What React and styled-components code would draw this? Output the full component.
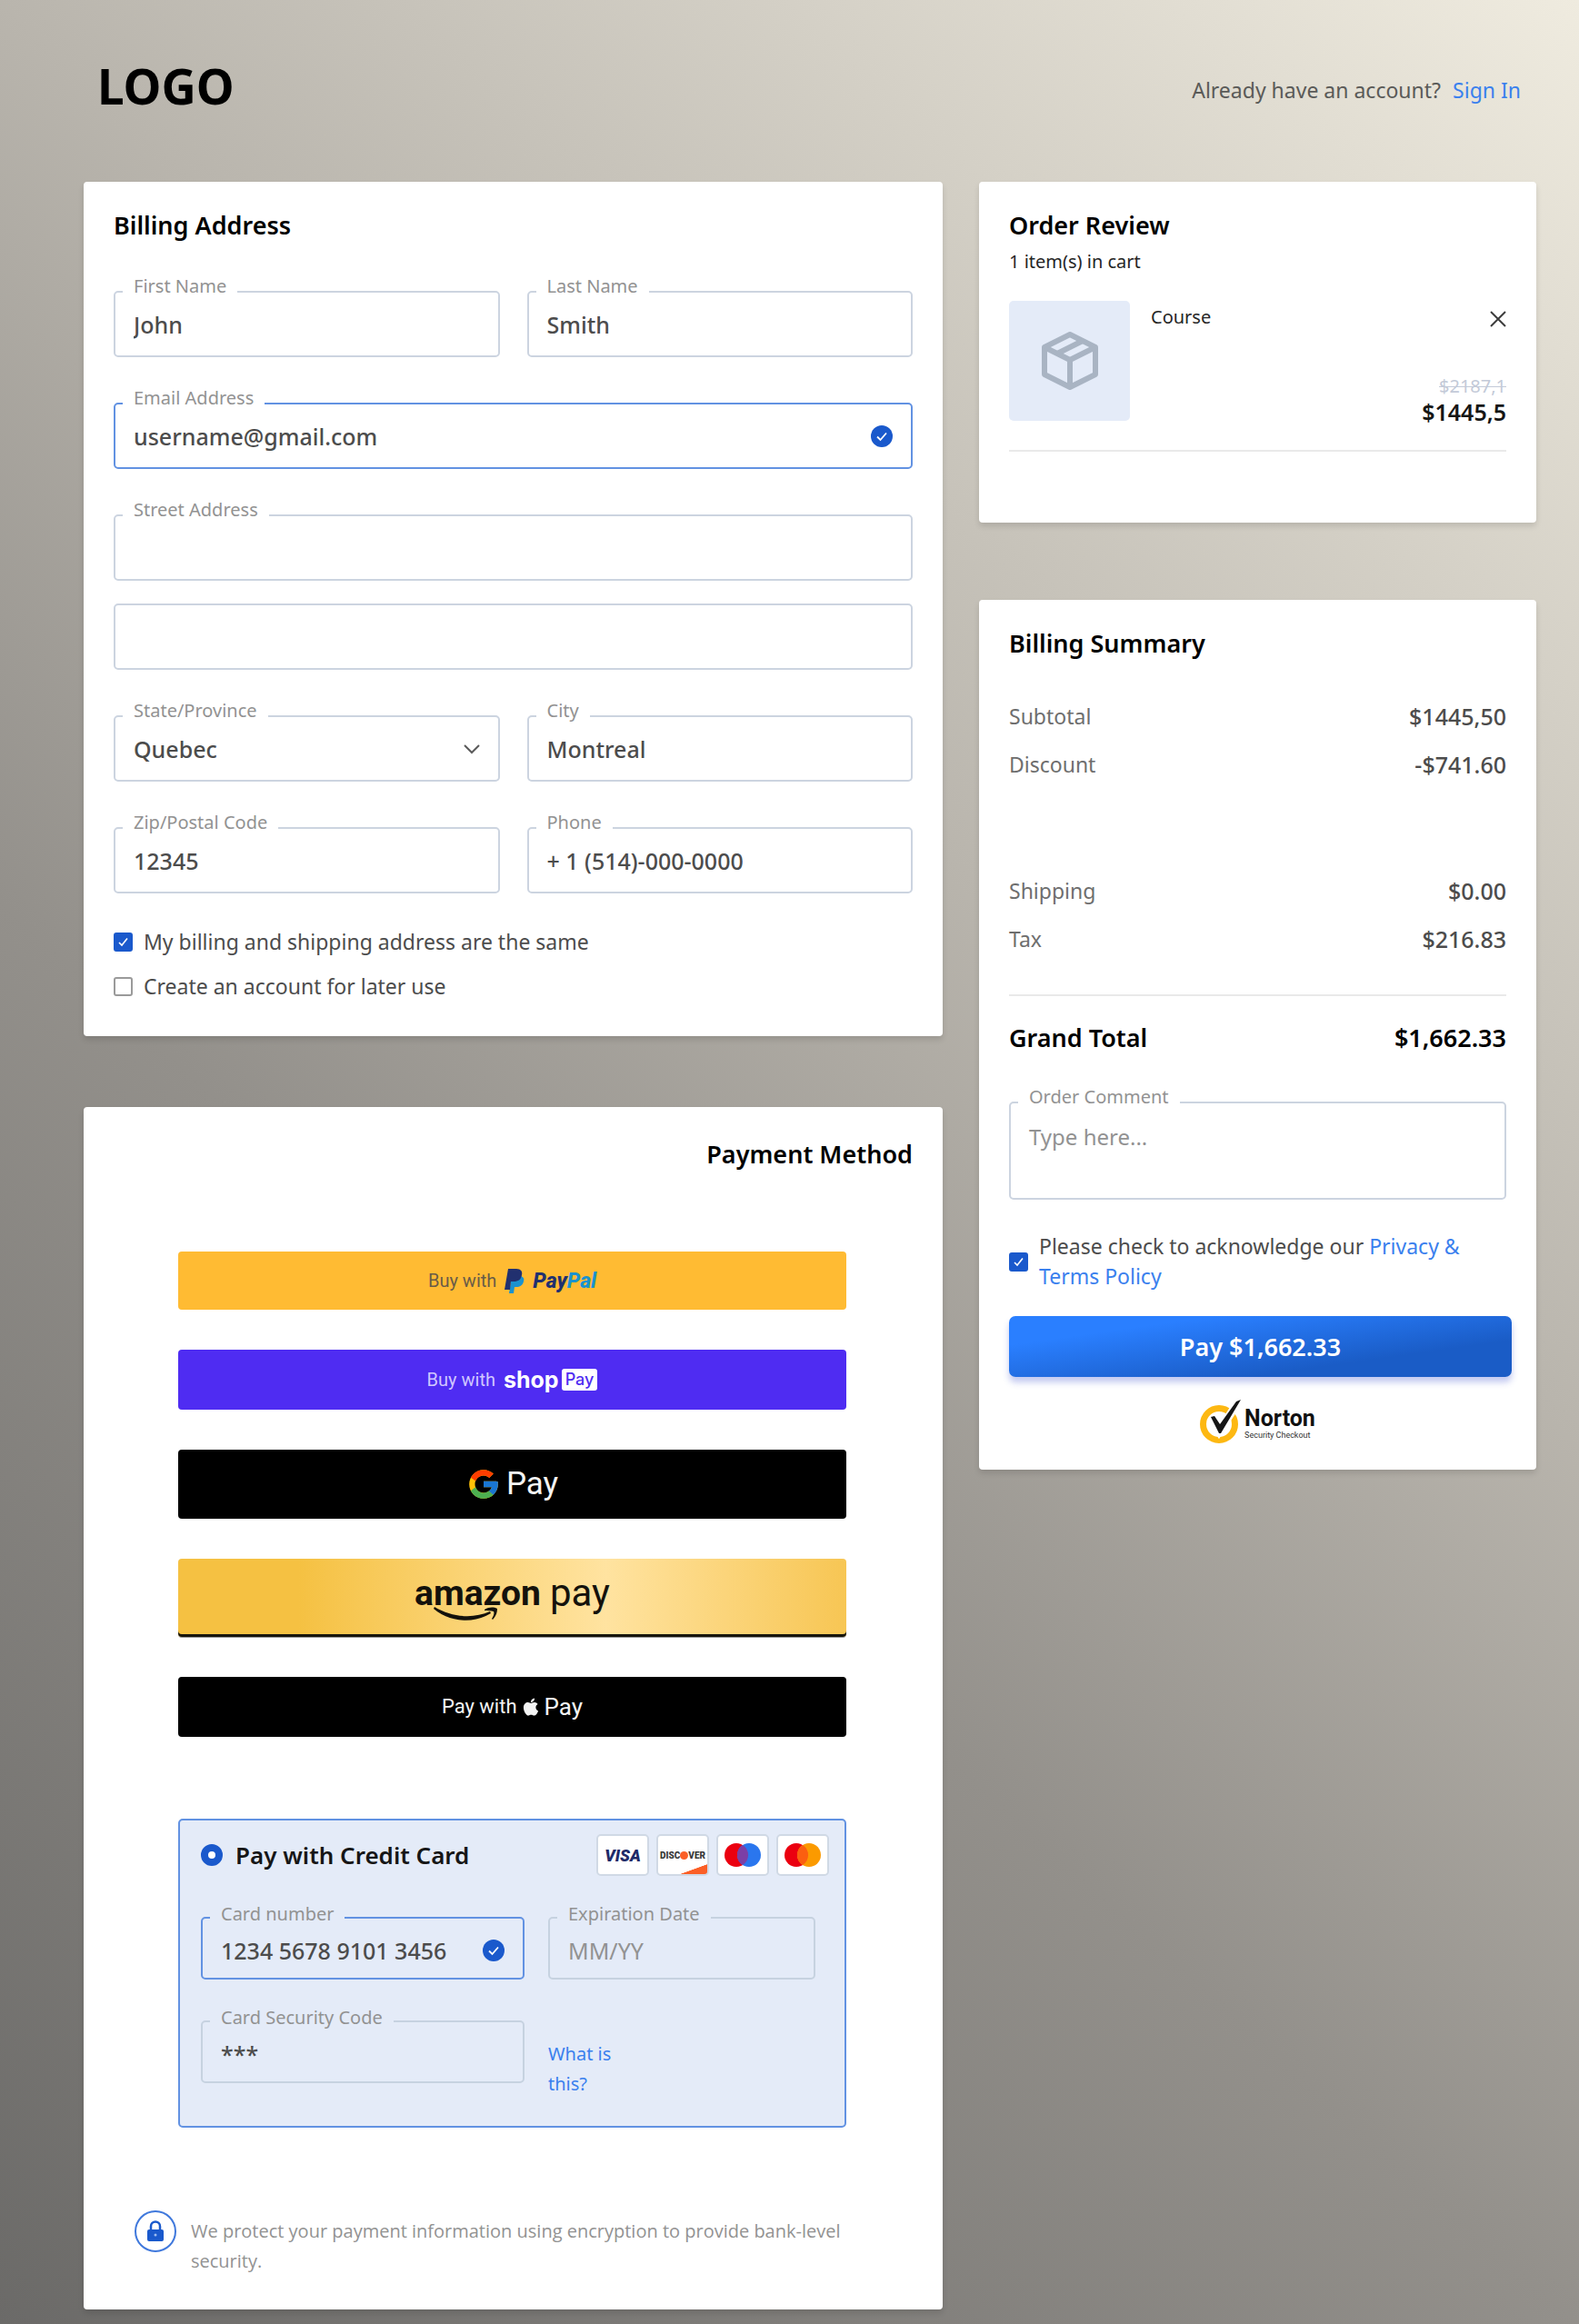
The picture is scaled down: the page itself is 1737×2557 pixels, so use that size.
import React from "react";
import styled, { createGlobalStyle, css } from "styled-components";
import { FcGoogle } from "react-icons/fc";
import { FaApple } from "react-icons/fa";

const blue = "#1a59cc";
const link = "#3a80ee";
const line = "#ccd4e0";

const Global = createGlobalStyle`
  *, *::before, *::after { box-sizing: border-box; }
  body {
    margin: 0;
    font-family: "Noto Sans", "Open Sans", sans-serif;
    font-size: 23px;
    color: #4c4c4c;
  }
  h1, h2, p, dl, dd, dt { margin: 0; }
  button, input, select, textarea { font: inherit; color: inherit; }
`;

const Page = styled.div`
  min-height: 100vh;
  padding-bottom: 16px;
  background: linear-gradient(222deg, #efebdf 0%, #b9b5ad 38%, #93908b 62%, #6b6a68 100%);
`;

const Header = styled.header`
  display: flex;
  justify-content: space-between;
  align-items: center;
  padding: 60px 64px 70px 107px;
`;

const Logo = styled.h1`
  font-size: 53px;
  line-height: 70px;
  font-weight: 700;
  color: #000;
`;

const Account = styled.p`
  display: flex;
  gap: 13px;
  padding-top: 8px;
  line-height: 32px;
  color: #5a5a58;
`;

const Link = styled.a`
  color: ${link};
  text-decoration: none;
`;

const Columns = styled.main`
  display: grid;
  grid-template-columns: minmax(0, 945fr) minmax(0, 613fr);
  column-gap: 40px;
  align-items: start;
  padding: 0 47px 0 92px;
`;

const Column = styled.div`
  display: flex;
  flex-direction: column;
  gap: ${(p) => p.$gap}px;
`;

const Card = styled.section`
  padding: ${(p) => p.$top || 30}px 33px ${(p) => p.$bottom}px;
  border-radius: 4px;
  background: #fff;
  box-shadow: 0 4px 6px rgba(0, 0, 0, 0.12);
`;

const Title = styled.h2`
  font-size: 27px;
  line-height: 36px;
  font-weight: 600;
  color: #000;
  text-align: ${(p) => (p.$end ? "right" : "left")};
`;

const Fields = styled.div`
  display: grid;
  gap: 50px;
  margin-top: 54px;
`;

const Pair = styled.div`
  display: grid;
  grid-template-columns: 1fr 1fr;
  gap: 30px;
`;

const Stack = styled.div`
  display: grid;
  gap: 25px;
`;

const FieldBox = styled.div`
  position: relative;
  display: grid;
  align-items: center;
  font-size: 25px;
  > * { grid-area: 1 / 1; }
`;

const FieldLabel = styled.label`
  position: absolute;
  top: ${(p) => (p.$tinted ? -17 : -19)}px;
  left: 10px;
  padding: 0 12px;
  font-size: 20px;
  line-height: 28px;
  color: #929292;
  background: ${(p) => (p.$tinted ? "#e4ebf8" : "#fff")};
`;

const control = css`
  width: 100%;
  height: ${(p) => (p.$tinted ? 69 : 73)}px;
  padding: ${(p) => (p.$tinted ? 5 : 0)}px 20px 0;
  border: 2px solid ${(p) => (p.$active ? "#6292e2" : p.$tinted ? "#c6d2e0" : line)};
  border-radius: 5px;
  outline: none;
  background: transparent;
  font-size: 25px;
  font-weight: 500;
  color: #4c4c4c;
  &::placeholder { color: #929292; opacity: 1; font-weight: 400; }
`;

const Input = styled.input`${control}`;

const Select = styled.select`
  ${control}
  appearance: none;
`;

const TextArea = styled.textarea`
  ${control}
  display: block;
  height: 108px;
  padding: 20px 20px;
  line-height: 34px;
  font-size: 24px;
  resize: none;
`;

const Trailing = styled.span`
  display: flex;
  justify-self: end;
  margin-right: 22px;
  padding-top: ${(p) => (p.$tinted ? 4 : 0)}px;
  pointer-events: none;
`;

function CheckDisc() {
  return (
    <svg width="24" height="24" viewBox="0 0 24 24" aria-hidden="true">
      <circle cx="12" cy="12" r="12" fill={blue} />
      <path d="M7 12.500l3.500 3.500L17 8.500" fill="none" stroke="#fff" strokeWidth="1.800" />
    </svg>
  );
}

function Field({ id, label, hiddenLabel, value, active, tinted, ...rest }) {
  return (
    <FieldBox>
      <Input
        id={id}
        defaultValue={value}
        aria-label={hiddenLabel}
        $active={active}
        $tinted={tinted}
        {...rest}
      />
      {label && <FieldLabel htmlFor={id} $tinted={tinted}>{label}</FieldLabel>}
      {active && <Trailing $tinted={tinted}><CheckDisc /></Trailing>}
    </FieldBox>
  );
}

const Checks = styled.div`
  display: grid;
  gap: 19px;
  margin-top: 38px;
`;

const CheckRow = styled.div`
  display: flex;
  align-items: center;
  gap: 12px;
  line-height: ${(p) => (p.$tall ? 33 : 30)}px;
  margin-top: ${(p) => (p.$tall ? 35 : 0)}px;
`;

const CheckWrap = styled.span`
  display: grid;
  flex: none;
  > * { grid-area: 1 / 1; }
  svg { pointer-events: none; }
`;

const CheckInput = styled.input`
  appearance: none;
  width: 21px;
  height: 21px;
  margin: 0;
  border: 2px solid #9a9a9a;
  border-radius: 3px;
  background: #fff;
  &:checked { border-color: ${blue}; background: ${blue}; }
  & + svg { visibility: hidden; }
  &:checked + svg { visibility: visible; }
`;

function Check({ id, checked, tall, children }) {
  return (
    <CheckRow $tall={tall}>
      <CheckWrap>
        <CheckInput type="checkbox" id={id} defaultChecked={checked} />
        <svg width="21" height="21" viewBox="0 0 21 21" aria-hidden="true">
          <path d="M6 11l3 3 6-7.500" fill="none" stroke="#fff" strokeWidth="1.600" />
        </svg>
      </CheckWrap>
      <label htmlFor={id}>{children}</label>
    </CheckRow>
  );
}

/* ---------- payment ---------- */

const Wallets = styled.div`
  display: grid;
  gap: 44px;
  margin: 89px 73px 0 71px;
`;

const Wallet = styled.button`
  display: flex;
  align-items: center;
  justify-content: center;
  gap: ${(p) => p.$gap || 9}px;
  width: 100%;
  height: ${(p) => p.$h}px;
  padding: 0;
  border: 0;
  border-radius: 4px;
  background: ${(p) => p.$bg};
  color: ${(p) => p.$fg};
  font-family: Roboto, "Open Sans", sans-serif;
  font-size: 20px;
  box-shadow: ${(p) => (p.$edge ? "inset 0 -3px 0 #17150c, 0 1px 0 #999" : "none")};
`;

const PayPalWord = styled.span`
  font-size: 23px;
  font-weight: 800;
  font-style: italic;
  color: #21306f;
  b { color: #1a92cf; font-weight: 800; }
`;

const ShopWord = styled.span`
  display: flex;
  align-items: center;
  gap: 3px;
  font-family: Inter, sans-serif;
  font-size: 25px;
  line-height: 24px;
  font-weight: 700;
  color: #fff;
`;

const ShopBadge = styled.span`
  padding: 0 4px;
  border-radius: 3px;
  background: #fff;
  color: #4f2cf2;
  font-size: 18px;
  font-weight: 500;
`;

const WalletWord = styled.span`
  font-size: ${(p) => p.$size}px;
  line-height: 42px;
  font-weight: ${(p) => (p.$bold ? 700 : 400)};
`;

const AmazonWord = styled.span`
  position: relative;
  display: flex;
  gap: 10px;
  padding-bottom: 10px;
  svg { position: absolute; left: 20px; top: 36px; }
`;

const Credit = styled.div`
  margin: 90px 73px 0 71px;
  padding: 15px 17px 30px 23px;
  border: 2px solid #6292e2;
  border-radius: 5px;
  background: #e4ebf8;
`;

const CreditHead = styled.div`
  display: flex;
  align-items: center;
  justify-content: space-between;
`;

const CreditChoice = styled.div`
  display: flex;
  align-items: center;
  gap: 14px;
  font-size: 26px;
  font-weight: 600;
  line-height: 36px;
  color: #161616;
`;

const Radio = styled.input`
  appearance: none;
  width: 24px;
  height: 24px;
  margin: 0;
  border: 8px solid ${blue};
  border-radius: 50%;
  background: #fff;
`;

const Brands = styled.div`
  display: flex;
  gap: 8px;
`;

const Brand = styled.span`
  display: flex;
  align-items: center;
  justify-content: center;
  width: 58px;
  height: 46px;
  border: 2px solid #d0d9e5;
  border-radius: 5px;
  background: ${(p) => (p.$wedge ? "linear-gradient(160deg, #fff 82%, #fb5f26 83%)" : "#fff")};
  font-family: Roboto, sans-serif;
  font-size: ${(p) => p.$size || 18}px;
  font-weight: 900;
  font-style: ${(p) => (p.$slant ? "italic" : "normal")};
  color: ${(p) => (p.$slant ? "#1f2a68" : "#3a3a3a")};
  i { width: 9px; height: 9px; border-radius: 50%; background: #fb5f26; }
`;

const CreditFields = styled.div`
  display: grid;
  grid-template-columns: minmax(0, 356fr) minmax(0, 294fr);
  gap: 45px 26px;
  align-items: start;
  margin-top: 45px;
  padding-right: 15px;
`;

const Hint = styled(Link)`
  width: 90px;
  margin-top: 20px;
  font-size: 20px;
  line-height: 33px;
`;

const Protect = styled.div`
  display: flex;
  align-items: flex-start;
  gap: 15px;
  margin-top: 90px;
  padding: 0 60px 0 22px;
  svg { flex: none; }
`;

const ProtectText = styled.p`
  margin-top: 7px;
  font-family: "Open Sans", "Noto Sans", sans-serif;
  font-size: 20px;
  line-height: 33px;
  color: #929292;
`;

/* ---------- order ---------- */

const Count = styled.p`
  margin-top: 8px;
  font-size: 20px;
  line-height: 28px;
  color: #262626;
`;

const Item = styled.div`
  display: grid;
  grid-template-columns: 133px 1fr auto;
  gap: 23px;
  margin-top: 29px;
`;

const Thumb = styled.div`
  display: grid;
  place-items: center;
  height: 132px;
  border-radius: 5px;
  background: #e4ebf8;
`;

const ItemName = styled.p`
  padding-top: 4px;
  font-size: 20px;
  line-height: 28px;
  color: #262626;
`;

const ItemSide = styled.div`
  display: flex;
  flex-direction: column;
  justify-content: space-between;
  align-items: flex-end;
  height: 136px;
  padding-top: 11px;
`;

const Remove = styled.button`
  display: flex;
  padding: 0;
  border: 0;
  background: none;
`;

const Prices = styled.div`
  display: grid;
  justify-items: end;
  line-height: 28px;
  s { font-size: 20px; color: #c3cad8; text-decoration-thickness: 1px; }
  strong { font-size: 25px; font-weight: 600; color: #161616; }
`;

const Rule = styled.hr`
  width: 100%;
  height: 2px;
  margin: ${(p) => p.$top}px 0 0;
  border: 0;
  background: #e9e9e9;
`;

const Totals = styled.dl`
  display: grid;
  gap: 21px;
  margin-top: ${(p) => p.$top}px;
`;

const TotalRow = styled.div`
  display: flex;
  justify-content: space-between;
  align-items: center;
  line-height: 32px;
  dt { color: #6e6e6e; }
  dd { font-size: 25px; font-weight: 500; }
`;

const Grand = styled.p`
  display: flex;
  justify-content: space-between;
  margin: 28px 0 52px;
  font-size: 27px;
  line-height: 36px;
  font-weight: 600;
  color: #000;
`;

const PayButton = styled.button`
  width: calc(100% + 6px);
  height: 67px;
  margin: 27px -6px 0 0;
  border: 0;
  border-radius: 7px;
  background: linear-gradient(172deg, #2a7fff 22%, #1a5cc6 72%);
  box-shadow: 0 6px 7px rgba(70, 90, 210, 0.32);
  color: #fff;
  font-size: 27px;
  font-weight: 600;
`;

const Norton = styled.div`
  display: flex;
  justify-content: center;
  gap: 3px;
  height: 48px;
  margin-top: 25px;
  font-family: Roboto, sans-serif;
`;

const NortonText = styled.div`
  padding-top: 8px;
  font-size: 9px;
  line-height: 12px;
  color: #333;
  strong { display: block; font-size: 25px; line-height: 25px; color: #111; }
`;

export default function App() {
  return (
    <Page>
      <Global />
      <Header>
        <Logo>LOGO</Logo>
        <Account>
          Already have an account? <Link href="#signin">Sign In</Link>
        </Account>
      </Header>

      <Columns>
        <Column $gap={78}>
          <Card $bottom={40}>
            <Title>Billing Address</Title>
            <Fields>
              <Pair>
                <Field id="first" label="First Name" value="John" />
                <Field id="last" label="Last Name" value="Smith" />
              </Pair>
              <Field id="email" label="Email Address" value="username@gmail.com" active />
              <Stack>
                <Field id="street" label="Street Address" value="" />
                <Field id="street2" hiddenLabel="Street Address, second line" value="" />
              </Stack>
              <Pair>
                <FieldBox>
                  <Select id="state" defaultValue="Quebec">
                    <option>Quebec</option>
                  </Select>
                  <FieldLabel htmlFor="state">State/Province</FieldLabel>
                  <Trailing>
                    <svg width="18" height="12" viewBox="0 0 18 12" aria-hidden="true">
                      <path d="M1 2l8 8 8-8" fill="none" stroke="#5a5a5a" strokeWidth="2" />
                    </svg>
                  </Trailing>
                </FieldBox>
                <Field id="city" label="City" value="Montreal" />
              </Pair>
              <Pair>
                <Field id="zip" label="Zip/Postal Code" value="12345" />
                <Field id="phone" label="Phone" value="+ 1 (514)-000-0000" />
              </Pair>
            </Fields>
            <Checks>
              <Check id="same" checked>My billing and shipping address are the same</Check>
              <Check id="create">Create an account for later use</Check>
            </Checks>
          </Card>

          <Card $top={34} $bottom={37}>
            <Title $end>Payment Method</Title>
            <Wallets>
              <Wallet type="button" $h={64} $bg="#ffbb33" $fg="#6a5c48">
                Buy with
                <svg width="22" height="27" viewBox="0 0 22 27" aria-hidden="true">
                  <path d="M8 8h10c3 1 4 3 3 6-1 4-4 6-8 6h-2l-1 7H5z" fill="#1a92cf" />
                  <path d="M4 0h9c5 0 7 3 6 7-1 5-4 7-9 7H7l-1 9H0z" fill="#21306f" />
                </svg>
                <PayPalWord>Pay<b>Pal</b></PayPalWord>
              </Wallet>
              <Wallet type="button" $h={66} $bg="#4f2cf2" $fg="#d0c6ff">
                Buy with
                <ShopWord>shop<ShopBadge>Pay</ShopBadge></ShopWord>
              </Wallet>
              <Wallet type="button" $h={76} $gap={6} $bg="#000" $fg="#f4f4f4">
                <FcGoogle size={38} aria-hidden="true" />
                <WalletWord $size={35}>Pay</WalletWord>
              </Wallet>
              <Wallet
                type="button"
                $h={86}
                $edge
                $bg="linear-gradient(90deg, #f5c142 18%, #ffe3a0 64%, #f7c654 100%)"
                $fg="#14120c"
              >
                <AmazonWord>
                  <WalletWord $size={39} $bold>amazon</WalletWord>
                  <WalletWord $size={42}>pay</WalletWord>
                  <svg width="74" height="18" viewBox="0 0 74 18" aria-hidden="true">
                    <path d="M1 2c18 15 44 17 63 5l-1-2C45 13 22 12 2 0z" fill="#14120c" />
                    <path d="M57 3c5-3 10-3 14-1 0 5-2 9-5 12l-1-1c2-3 3-6 2-8-3-1-6-1-10-1z" fill="#14120c" />
                  </svg>
                </AmazonWord>
              </Wallet>
              <Wallet type="button" $h={66} $gap={4} $bg="#000" $fg="#f4f4f4">
                <WalletWord $size={22}>Pay with</WalletWord>
                <FaApple size={22} aria-hidden="true" />
                <WalletWord $size={26}>Pay</WalletWord>
              </Wallet>
            </Wallets>

            <Credit>
              <CreditHead>
                <CreditChoice>
                  <Radio type="radio" name="method" id="credit" defaultChecked />
                  <label htmlFor="credit">Pay with Credit Card</label>
                </CreditChoice>
                <Brands>
                  <Brand $slant>VISA</Brand>
                  <Brand $wedge $size={10}>DISC<i />VER</Brand>
                  <Brand>
                    <svg width="42" height="28" viewBox="0 0 42 28" role="img" aria-label="Maestro">
                      <circle cx="14" cy="14" r="13" fill="#eb0010" />
                      <circle cx="28" cy="14" r="13" fill="#2a76ee" />
                      <path d="M21 3a13 13 0 0 1 0 22a13 13 0 0 1 0-22z" fill="#7b3fa6" />
                    </svg>
                  </Brand>
                  <Brand>
                    <svg width="42" height="28" viewBox="0 0 42 28" role="img" aria-label="Mastercard">
                      <circle cx="14" cy="14" r="13" fill="#eb0010" />
                      <circle cx="28" cy="14" r="13" fill="#fb9a00" />
                      <path d="M21 3a13 13 0 0 1 0 22a13 13 0 0 1 0-22z" fill="#fb5f10" />
                    </svg>
                  </Brand>
                </Brands>
              </CreditHead>
              <CreditFields>
                <Field id="card" label="Card number" value="1234 5678 9101 3456" active tinted />
                <Field id="expiry" label="Expiration Date" placeholder="MM/YY" tinted />
                <Field id="cvc" label="Card Security Code" value="***" tinted />
                <Hint href="#cvc-help">What is this?</Hint>
              </CreditFields>
            </Credit>

            <Protect>
              <svg width="48" height="48" viewBox="0 0 48 48" aria-hidden="true">
                <circle cx="24" cy="24" r="22" fill="none" stroke="#3f78dc" strokeWidth="2" />
                <path d="M19 23v-4.500a5 5 0 0 1 10 0V23" fill="none" stroke={blue} strokeWidth="2.500" />
                <rect x="15" y="22" width="18" height="13" rx="2" fill={blue} />
                <circle cx="24" cy="28" r="1.500" fill="#9dbcf0" />
              </svg>
              <ProtectText>
                We protect your payment information using encryption to provide bank-level security.
              </ProtectText>
            </Protect>
          </Card>
        </Column>

        <Column $gap={85}>
          <Card $bottom={78}>
            <Title>Order Review</Title>
            <Count>1 item(s) in cart</Count>
            <Item>
              <Thumb>
                <svg width="64" height="64" viewBox="0 0 64 64" fill="none" stroke="#a9b4c3" strokeWidth="6" strokeLinejoin="round" aria-hidden="true">
                  <path d="M32 3l28 14v30L32 61 4 47V17z" />
                  <path d="M4 17l28 14 28-14M32 31v30" />
                  <path d="M18 24l28-14" />
                </svg>
              </Thumb>
              <ItemName>Course</ItemName>
              <ItemSide>
                <Remove type="button" aria-label="Remove Course">
                  <svg width="18" height="18" viewBox="0 0 18 18" aria-hidden="true">
                    <path d="M1 1l16 16M17 1L1 17" stroke="#3c3c3c" strokeWidth="2" />
                  </svg>
                </Remove>
                <Prices>
                  <s>$2187,1</s>
                  <strong>$1445,5</strong>
                </Prices>
              </ItemSide>
            </Item>
            <Rule $top={28} />
          </Card>

          <Card $bottom={29}>
            <Title>Billing Summary</Title>
            <Totals $top={46}>
              <TotalRow><dt>Subtotal</dt><dd>$1445,50</dd></TotalRow>
              <TotalRow><dt>Discount</dt><dd>-$741.60</dd></TotalRow>
            </Totals>
            <Totals $top={107}>
              <TotalRow><dt>Shipping</dt><dd>$0.00</dd></TotalRow>
              <TotalRow><dt>Tax</dt><dd>$216.83</dd></TotalRow>
            </Totals>
            <Rule $top={45} />
            <Grand><span>Grand Total</span><span>$1,662.33</span></Grand>
            <FieldBox>
              <TextArea id="comment" placeholder="Type here..." />
              <FieldLabel htmlFor="comment">Order Comment</FieldLabel>
            </FieldBox>
            <Check id="terms" checked tall>
              Please check to acknowledge our <Link href="#privacy">Privacy &amp; Terms Policy</Link>
            </Check>
            <PayButton type="submit">Pay $1,662.33</PayButton>
            <Norton>
              <svg width="46" height="48" viewBox="0 0 46 48" aria-hidden="true">
                <circle cx="21" cy="27" r="17.500" fill="none" stroke="#fdb812" strokeWidth="7" />
                <path d="M12 21l9 14L43 1" fill="none" stroke="#fff" strokeWidth="9" />
                <path d="M12 19l4-1 6 9L40 2l5-2L23 37h-2z" fill="#161616" />
              </svg>
              <NortonText><strong>Norton</strong>Security Checkout</NortonText>
            </Norton>
          </Card>
        </Column>
      </Columns>
    </Page>
  );
}
